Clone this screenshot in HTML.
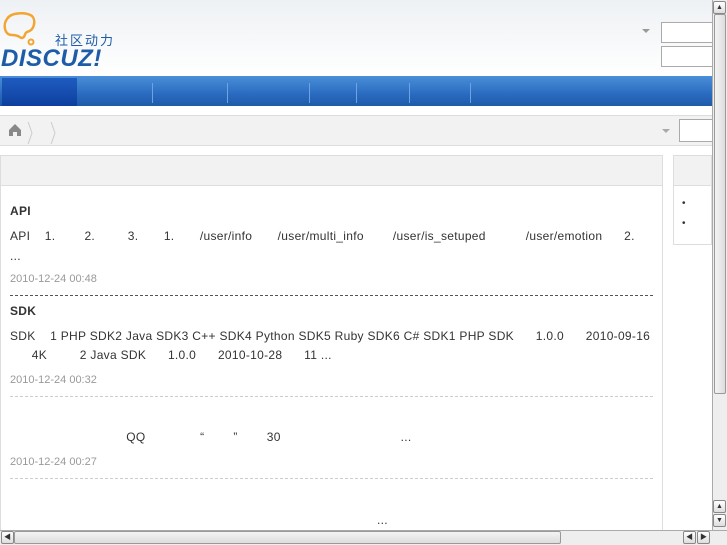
<!DOCTYPE html>
<html><head><meta charset="utf-8"><style>
*{margin:0;padding:0;box-sizing:border-box}
body{width:727px;height:545px;overflow:hidden;position:relative;background:#fff;font-family:"Liberation Sans","Noto Sans CJK SC",sans-serif;font-size:12px;color:#333}
.a{position:absolute}
.hdr{left:0;top:0;width:712px;height:76px;background:linear-gradient(#eef1f4,#fff)}
.nav{left:0;top:76px;width:712px;height:30px;background:linear-gradient(#4a8fd8,#2a6bc0 60%,#1f5aa8)}
.nav .on{left:2px;top:2px;width:75px;height:28px;background:linear-gradient(#1f5cc0,#0d3f9e)}
.sep{top:7px;width:1px;height:20px;background:#6fa3e0}
.bc{left:0;top:115px;width:712px;height:31px;background:#f2f2f2;border-top:1px solid #ddd;border-bottom:1px solid #ddd}
.box{left:0;top:155px;width:663px;height:380px;border:1px solid #ddd;background:#fff}
.box .h{left:0;top:0;width:661px;height:30px;background:#f2f2f2;border-bottom:1px solid #ddd}
.side{left:673px;top:155px;width:39px;height:90px;border:1px solid #ddd}
.side .h{left:0;top:0;width:37px;height:30px;background:#f2f2f2;border-bottom:1px solid #ddd}
.t{left:10px;white-space:pre;font-size:12px;color:#333;letter-spacing:0.3px}
.d{left:10px;font-size:11px;color:#999}
.ln{left:10px;width:643px;height:0}
.inp{background:#fff;border:1px solid #aaa}
.vs{left:712px;top:0;width:15px;height:530px;background:#eee;border-left:1px solid #aaa}
.hs{left:0;top:530px;width:727px;height:15px;background:#eee;border-top:1px solid #aaa}
.btn{width:13px;height:13px;border:1px solid #888;background:linear-gradient(#fff,#ddd);font-size:7px;line-height:11px;text-align:center;border-radius:2px}
</style></head><body>
<div class="a hdr"></div>
<svg class="a" style="left:2px;top:10px" width="36" height="36" viewBox="0 0 36 36"><path d="M10 25 C2 25 1 14 5 9 C9 2 24 2 30 6 C34 10 33 20 25 22 C22 23 24 27 20 28 C17 28 18 25 10 25Z" fill="none" stroke="#f2a531" stroke-width="2.5"/><circle cx="29" cy="32" r="2.5" fill="none" stroke="#f2a531" stroke-width="2"/></svg>
<div class="a" style="left:55px;top:30px;font-size:13px;color:#1e5ca8;letter-spacing:2px">社区动力</div>
<div class="a" style="left:1px;top:45px;font-size:24px;font-weight:bold;font-style:italic;color:#1e5ca8;letter-spacing:0.5px">DISCUZ!</div>
<div class="a" style="left:642px;top:29px;border:4px solid transparent;border-top-color:#999"></div>
<div class="a inp" style="left:661px;top:22px;width:52px;height:21px"></div>
<div class="a inp" style="left:661px;top:46px;width:52px;height:21px"></div>
<div class="a nav"><div class="a on"></div>
<div class="a sep" style="left:152px"></div><div class="a sep" style="left:227px"></div><div class="a sep" style="left:309px"></div><div class="a sep" style="left:356px"></div><div class="a sep" style="left:409px"></div><div class="a sep" style="left:470px"></div></div>
<div class="a bc"></div>
<svg class="a" style="left:6px;top:122px" width="60" height="22" viewBox="0 0 60 22"><path d="M3 8 L9 2 L15 8 L15 14 L11 14 L11 10 L7 10 L7 14 L3 14Z" fill="#888"/><path d="M20 -6 L26 11 L20 28 M43 -6 L49 11 L43 28" fill="none" stroke="#ccc"/></svg>
<div class="a" style="left:662px;top:129px;border:4px solid transparent;border-top-color:#aaa"></div>
<div class="a inp" style="left:679px;top:119px;width:34px;height:23px"></div>
<div class="a box"><div class="a h"></div></div>
<div class="a side"><div class="a h"></div><div class="a" style="left:8px;top:42px;font-size:10px">•</div><div class="a" style="left:8px;top:62px;font-size:10px">•</div></div>
<div class="a t" style="top:204px;font-weight:bold">API</div>
<div class="a t" style="top:229px">API    1.        2.         3.       1.       /user/info       /user/multi_info        /user/is_setuped           /user/emotion      2.</div>
<div class="a t" style="top:249px">...</div>
<div class="a d" style="top:273px">2010-12-24 00:48</div>
<div class="a ln" style="top:295px;border-top:1px dashed #555"></div>
<div class="a t" style="top:304px;font-weight:bold">SDK</div>
<div class="a t" style="top:329px">SDK    1 PHP SDK2 Java SDK3 C++ SDK4 Python SDK5 Ruby SDK6 C# SDK1 PHP SDK      1.0.0      2010-09-16</div>
<div class="a t" style="top:348px">      4K         2 Java SDK      1.0.0      2010-10-28      11 ...</div>
<div class="a d" style="top:374px">2010-12-24 00:32</div>
<div class="a ln" style="top:396px;border-top:1px dashed #ccc"></div>
<div class="a t" style="top:430px">                                QQ               “        ”        30                                 ...</div>
<div class="a d" style="top:456px">2010-12-24 00:27</div>
<div class="a ln" style="top:478px;border-top:1px dashed #ccc"></div>
<div class="a t" style="top:513px;left:377px">...</div>
<div class="a vs"><div class="a btn" style="left:0;top:1px">▲</div>
<div class="a" style="left:1px;top:14px;width:12px;height:380px;background:linear-gradient(90deg,#f4f4f4,#ddd);border:1px solid #999;border-radius:2px"></div>
<div class="a btn" style="left:0;top:500px">▲</div><div class="a btn" style="left:0;top:514px">▼</div></div>
<div class="a hs"><div class="a btn" style="left:1px;top:0">◀</div>
<div class="a" style="left:14px;top:0;width:547px;height:13px;background:linear-gradient(#f4f4f4,#ddd);border:1px solid #999;border-radius:2px"></div>
<div class="a btn" style="left:683px;top:0">◀</div><div class="a btn" style="left:697px;top:0">▶</div></div>
</body></html>
